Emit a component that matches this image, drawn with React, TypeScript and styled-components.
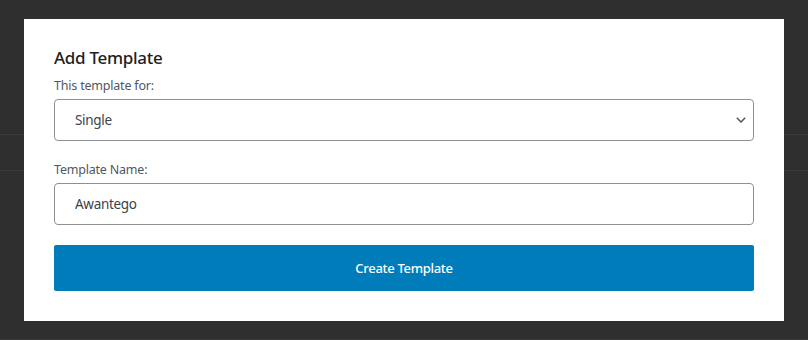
import styled, { createGlobalStyle } from 'styled-components';

const GlobalStyles = createGlobalStyle`
  html, body {
    margin: 0;
    padding: 0;
    background: #2f2f2f;
  }
  body {
    font-family: "Noto Sans", "Open Sans", sans-serif;
  }
`;

const Page = styled.div`
  position: relative;
  width: 808px;
  height: 340px;
  overflow: hidden;
  background: #2f2f2f;
  display: flex;
  flex-direction: column;
`;

const Band = styled.div<{ $h?: number }>`
  height: ${({ $h }) => ($h ? `${$h}px` : 'auto')};
  flex: ${({ $h }) => ($h ? '0 0 auto' : '1')};
  border-bottom: 1px solid #3a3a3a;
`;

const Modal = styled.div`
  position: absolute;
  left: 24px;
  top: 19px;
  width: 760px;
  box-sizing: border-box;
  padding: 27px 30px 30px;
  background: #ffffff;
  display: flex;
  flex-direction: column;
`;

const Title = styled.h2`
  margin: 0 0 7px;
  font-size: 17px;
  line-height: 24px;
  font-weight: 500;
  letter-spacing: -0.3px;
  color: #1e1e1e;
`;

const Label = styled.label<{ $top?: number }>`
  display: block;
  margin: ${({ $top }) => $top ?? 0}px 0 4px;
  font-size: 12.5px;
  line-height: 18px;
  letter-spacing: -0.2px;
  color: #50575e;
`;

const Field = styled.div`
  position: relative;
`;

const Select = styled.select`
  appearance: none;
  display: block;
  width: 100%;
  height: 42px;
  box-sizing: border-box;
  margin: 0;
  padding: 0 36px 0 20px;
  border: 1px solid #8c8f94;
  border-radius: 4px;
  background: #fff;
  font-family: inherit;
  font-size: 13.5px;
  letter-spacing: -0.3px;
  color: #3c434a;
`;

const Chevron = styled.svg`
  position: absolute;
  right: 8px;
  top: 50%;
  width: 10px;
  height: 6px;
  margin-top: -3px;
  pointer-events: none;
`;

const Input = styled.input`
  display: block;
  width: 100%;
  height: 42px;
  box-sizing: border-box;
  margin: 0;
  padding: 0 20px;
  border: 1px solid #8c8f94;
  border-radius: 4px;
  font-family: inherit;
  font-size: 13.5px;
  letter-spacing: -0.3px;
  color: #3c434a;
`;

const Button = styled.button`
  margin-top: 20px;
  height: 46px;
  border: none;
  border-radius: 2px;
  background: #007cba;
  color: #fff;
  font-family: inherit;
  font-size: 13px;
  font-weight: 500;
  letter-spacing: -0.3px;
  cursor: pointer;
`;

export default function App() {
  return (
    <>
      <GlobalStyles />
      <Page>
        <Band $h={134} />
        <Band $h={35} />
        <Band />
        <Modal>
          <Title>Add Template</Title>
          <Label>This template for:</Label>
          <Field>
            <Select defaultValue="single">
              <option value="single">Single</option>
              <option value="archive">Archive</option>
            </Select>
            <Chevron viewBox="0 0 10 6" fill="none">
              <path d="M0.8 0.8L5 5L9.2 0.8" stroke="#50575e" strokeWidth="1.5" />
            </Chevron>
          </Field>
          <Label $top={20}>Template Name:</Label>
          <Input defaultValue="Awantego" />
          <Button>Create Template</Button>
        </Modal>
      </Page>
    </>
  );
}
